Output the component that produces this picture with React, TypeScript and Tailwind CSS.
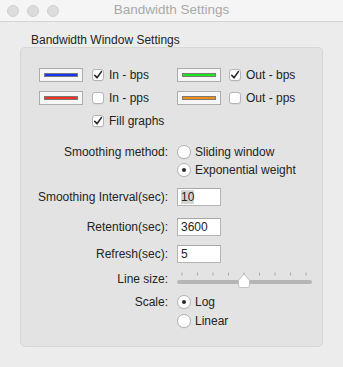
import React from "react";

function CheckBox({ checked }: { checked: boolean }) {
    return (
        <div className="w-[12px] h-[12px] rounded-[3px] bg-white border border-[#b4b4b4] shadow-[0_0.5px_0.5px_rgba(0,0,0,0.08)] flex items-center justify-center shrink-0">
            {checked && (
                <svg width="10" height="10" viewBox="0 0 10 10" aria-hidden="true">
                    <path d="M1.8 5.4 L4 7.8 L8.4 1.6" fill="none" stroke="#2b2b2b" strokeWidth="1.6" strokeLinecap="round" strokeLinejoin="round" />
                </svg>
            )}
        </div>
    );
}

function Radio({ checked }: { checked: boolean }) {
    return (
        <div className="w-[14px] h-[14px] rounded-full bg-white border border-[#b4b4b4] shadow-[0_0.5px_0.5px_rgba(0,0,0,0.08)] flex items-center justify-center shrink-0">
            {checked && <div className="w-[4px] h-[4px] rounded-full bg-[#2a2a2a]" />}
        </div>
    );
}

function ColorWell({ color }: { color: string }) {
    return (
        <div className="w-[44px] h-[14px] bg-[#f6f6f6] border border-[#acacac] flex items-center justify-center shrink-0">
            <div className="w-[34px] h-[4px] border border-[#7a7a7a]" style={{ backgroundColor: color }} />
        </div>
    );
}

function CheckItem({ checked, label }: { checked: boolean; label: string }) {
    return (
        <div className="flex items-center gap-[5px]">
            <CheckBox checked={checked} />
            <span>{label}</span>
        </div>
    );
}

function Field({ value, selected }: { value: string; selected?: boolean }) {
    return (
        <div className="w-[44px] h-[18px] bg-white border border-[#b4b4b4] border-t-[#a8a8a8] flex items-center pl-[3px]">
            <span className={selected ? "bg-[#d5d5d5] leading-[14px]" : "leading-[14px]"}>{value}</span>
        </div>
    );
}

function Slider() {
    const ticks = [5, 20.5, 36, 51.5, 67, 82.5, 98, 113.5, 129];
    return (
        <svg width="135" height="16" viewBox="0 0 135 16" aria-hidden="true">
            {ticks.map((x) => (
                <rect key={x} x={x - 0.5} y="0.5" width="1" height="3" fill="#a9a9a9" />
            ))}
            <rect x="0" y="8" width="135" height="4" rx="2" fill="#b6b6b6" />
            <path
                d="M61.5 13.5 Q61.5 15.5 63.5 15.5 L70.5 15.5 Q72.5 15.5 72.5 13.5 L72.5 8.5 L67 2 L61.5 8.5 Z"
                fill="#ffffff"
                stroke="#b0b0b0"
                strokeWidth="0.7"
            />
        </svg>
    );
}

function FormRow({ label, children, className }: { label: string; children: React.ReactNode; className: string }) {
    return (
        <div className={`flex items-center ${className}`}>
            <div className="w-[147px] text-right">{label}</div>
            <div className="ml-[9px]">{children}</div>
        </div>
    );
}

export default function App() {
    return (
        <div className="w-[343px] h-[367px] bg-[#ececec] text-[12px] text-[#242424] font-['Liberation_Sans',Arial,sans-serif] overflow-hidden">
            <div className="h-[22px] bg-[#f5f5f5] border-b border-[#d4d4d4] grid grid-cols-[1fr_auto_1fr] items-center">
                <div className="flex items-center gap-[8px] pl-[7px]">
                    <div className="w-[12px] h-[12px] rounded-full bg-[#dcdcdc] border border-[#d0d0d0]" />
                    <div className="w-[12px] h-[12px] rounded-full bg-[#dcdcdc] border border-[#d0d0d0]" />
                    <div className="w-[12px] h-[12px] rounded-full bg-[#dcdcdc] border border-[#d0d0d0]" />
                </div>
                <div className="text-[13.5px] text-[#a9a9a9]">Bandwidth Settings</div>
                <div />
            </div>

            <div className="mt-[12px] ml-[31px] h-[13px] leading-[13px]">Bandwidth Window Settings</div>

            <div className="ml-[20px] w-[303px] h-[300px] bg-[#e3e3e3] border border-[#d7d7d7] rounded-[5px]">
                <div className="mt-[20px] h-[14px] pl-[18px] flex items-center">
                    <div className="w-[138px] flex items-center gap-[9px]">
                        <ColorWell color="#1436f0" />
                        <CheckItem checked label="In - bps" />
                    </div>
                    <div className="flex items-center gap-[8px]">
                        <ColorWell color="#1ee61e" />
                        <CheckItem checked label="Out - bps" />
                    </div>
                </div>
                <div className="mt-[9px] h-[14px] pl-[18px] flex items-center">
                    <div className="w-[138px] flex items-center gap-[9px]">
                        <ColorWell color="#f0321e" />
                        <CheckItem checked={false} label="In - pps" />
                    </div>
                    <div className="flex items-center gap-[8px]">
                        <ColorWell color="#f08c14" />
                        <CheckItem checked={false} label="Out - pps" />
                    </div>
                </div>
                <div className="mt-[9px] h-[14px] pl-[71px] flex items-center">
                    <CheckItem checked label="Fill graphs" />
                </div>

                <FormRow label="Smoothing method:" className="mt-[17px] h-[14px]">
                    <div className="flex items-center gap-[4px]">
                        <Radio checked={false} />
                        <span>Sliding window</span>
                    </div>
                </FormRow>
                <div className="mt-[4px] h-[14px] pl-[156px] flex items-center gap-[4px]">
                    <Radio checked />
                    <span>Exponential weight</span>
                </div>

                <FormRow label="Smoothing Interval(sec):" className="mt-[11px] h-[18px]">
                    <Field value="10" selected />
                </FormRow>
                <FormRow label="Retention(sec):" className="mt-[12px] h-[18px]">
                    <Field value="3600" />
                </FormRow>
                <FormRow label="Refresh(sec):" className="mt-[9px] h-[18px]">
                    <Field value="5" />
                </FormRow>
                <FormRow label="Line size:" className="mt-[8px] h-[16px]">
                    <div className="mt-[2px]">
                        <Slider />
                    </div>
                </FormRow>
                <FormRow label="Scale:" className="mt-[8px] h-[14px]">
                    <div className="flex items-center gap-[4px]">
                        <Radio checked />
                        <span>Log</span>
                    </div>
                </FormRow>
                <div className="mt-[5px] h-[14px] pl-[156px] flex items-center gap-[4px]">
                    <Radio checked={false} />
                    <span>Linear</span>
                </div>
            </div>
        </div>
    );
}
